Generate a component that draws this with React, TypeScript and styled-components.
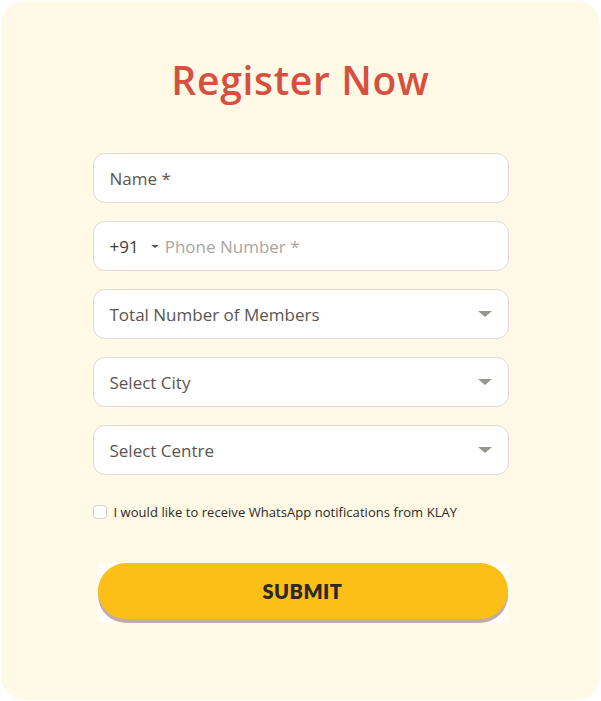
import React, { FC } from 'react';
import styled, { createGlobalStyle } from 'styled-components';

const GlobalStyle = createGlobalStyle`
  html, body {
    margin: 0;
    padding: 0;
    background: #ffffff;
  }
  * {
    box-sizing: border-box;
  }
`;

const Card = styled.div`
  margin: 1px;
  width: 599px;
  height: 699px;
  background: #fff9e6;
  border-radius: 24px;
  display: flex;
  flex-direction: column;
  align-items: center;
  font-family: 'Open Sans', Lato, sans-serif;
`;

const Title = styled.h1`
  margin: 57px 0 0;
  height: 44px;
  line-height: 44px;
  font-size: 39px;
  font-weight: 600;
  letter-spacing: 0.7px;
  color: #d5503f;
`;

const Form = styled.form`
  margin-top: 51px;
  width: 416px;
  display: flex;
  flex-direction: column;
  gap: 18px;
`;

const Field = styled.div`
  height: 50px;
  background: #ffffff;
  border: 1px solid #dedbd6;
  border-radius: 12px;
  padding: 0 16px;
  display: flex;
  align-items: center;
  font-size: 17px;
  color: #5a5550;
`;

const Label = styled.span<{ $muted?: boolean }>`
  flex: 1;
  color: ${(p) => (p.$muted ? '#aaa6a1' : '#5a5550')};
`;

const Code = styled.span`
  color: #3f3b37;
  margin-right: 12px;
`;

const Caret = styled.span<{ $size: number }>`
  width: 0;
  height: 0;
  border-left: ${(p) => p.$size}px solid transparent;
  border-right: ${(p) => p.$size}px solid transparent;
  border-top: ${(p) => p.$size * 0.9}px solid
    ${(p) => (p.$size > 5 ? '#999591' : '#5a5550')};
`;

const SmallCaret = styled(Caret)`
  margin-right: 6px;
`;

const CheckRow = styled.label`
  margin-top: 10px;
  display: flex;
  align-items: center;
  gap: 7px;
  font-size: 13px;
  letter-spacing: 0.05px;
  color: #2b2825;
`;

const Box = styled.span`
  width: 14px;
  height: 14px;
  border: 1px solid #d6d3ce;
  border-radius: 3px;
  background: #ffffff;
`;

const ButtonWrap = styled.div`
  margin: 24px 0 0 5px;
  width: 411px;
  height: 60px;
  background: #fffdf6;
`;

const Submit = styled.button`
  width: 410px;
  height: 56px;
  border: none;
  border-radius: 28px;
  background: #fbbf18;
  box-shadow: 0 4px 0 #c4aba5;
  font-family: Lato, 'Open Sans', sans-serif;
  font-size: 20px;
  font-weight: 800;
  letter-spacing: 0.5px;
  color: #2b2825;
`;

const Select: FC<{ label: string }> = ({ label }) => (
  <Field>
    <Label>{label}</Label>
    <Caret $size={7} />
  </Field>
);

export default function App() {
  return (
    <>
      <GlobalStyle />
      <Card>
        <Title>Register Now</Title>
        <Form>
          <Field>
            <Label>Name *</Label>
          </Field>
          <Field>
            <Code>+91</Code>
            <SmallCaret $size={4} />
            <Label $muted>Phone Number *</Label>
          </Field>
          <Select label="Total Number of Members" />
          <Select label="Select City" />
          <Select label="Select Centre" />
          <CheckRow>
            <Box />I would like to receive WhatsApp notifications from KLAY
          </CheckRow>
          <ButtonWrap>
            <Submit type="button">SUBMIT</Submit>
          </ButtonWrap>
        </Form>
      </Card>
    </>
  );
}
